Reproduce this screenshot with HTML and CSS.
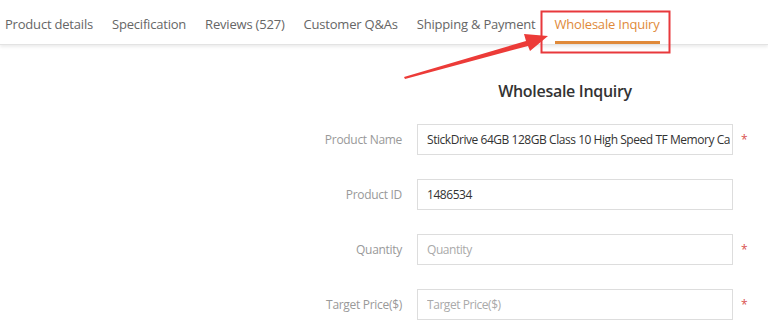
FILE: index.html
```html
<!DOCTYPE html>
<html lang="en">
  <head>
    <meta charset="UTF-8" />
    <meta name="viewport" content="width=device-width, initial-scale=1.0" />
    <title>Wholesale Inquiry</title>
    <link rel="stylesheet" href="styles.css">
  </head>

  <body>
    <nav class="tabs">
      <a class="tab">Product details</a>
      <a class="tab">Specification</a>
      <a class="tab">Reviews (527)</a>
      <a class="tab">Customer Q&amp;As</a>
      <a class="tab">Shipping &amp; Payment</a>
      <a class="tab active">Wholesale Inquiry</a>
    </nav>

    <main class="inquiry">
      <h2 class="inquiry-title">Wholesale Inquiry</h2>
      <form class="inquiry-form">
        <label class="field-label" for="productName">Product Name</label>
        <input id="productName" type="text" value="StickDrive 64GB 128GB Class 10 High Speed TF Memory Card" />
        <span class="required">*</span>

        <label class="field-label" for="productId">Product ID</label>
        <input id="productId" type="text" value="1486534" />
        <span class="required"></span>

        <label class="field-label" for="quantity">Quantity</label>
        <input id="quantity" type="text" placeholder="Quantity" />
        <span class="required">*</span>

        <label class="field-label" for="targetPrice">Target Price($)</label>
        <input id="targetPrice" type="text" placeholder="Target Price($)" />
        <span class="required">*</span>
      </form>
    </main>

    <!-- anotacion sobre la captura -->
    <svg class="annotation" width="768" height="333" viewBox="0 0 768 333">
      <rect x="541.5" y="11.5" width="128" height="41" fill="none" stroke="#e8393c" stroke-width="2" />
      <polygon points="404,77 526,41 524,34 548,36 530,51 528,46 405,79" fill="#ec3b38" />
    </svg>
  </body>
</html>
```

FILE: styles.css
```css
body {
  margin: 0;
  font-family: "Open Sans", "Liberation Sans", sans-serif;
  background: #fff;
  position: relative;
  height: 333px;
  overflow: hidden;
}

.tabs {
  display: flex;
  padding-left: 5px;
  height: 44px;
  border-bottom: 1px solid #e3e3e3;
  box-shadow: 0 2px 3px rgba(0, 0, 0, 0.08);
}

.tab {
  margin-right: 19px;
  padding-top: 14px;
  line-height: 20px;
  font-size: 13px;
  letter-spacing: -0.2px;
  color: #666;
  box-sizing: border-box;
  height: 44px;
}

.tab.active {
  color: #e08a3a;
  border-bottom: 3px solid #e08a3a;
}

.inquiry {
  padding-top: 35px;
}

.inquiry-title {
  margin: 0 0 22px;
  padding-left: 417px;
  width: 296px;
  text-align: center;
  font-size: 16px;
  font-weight: 600;
  letter-spacing: -0.3px;
  line-height: 22px;
  color: #333;
}

.inquiry-form {
  display: grid;
  grid-template-columns: 417px 316px 30px;
  row-gap: 24px;
  align-items: center;
}

.field-label {
  padding-right: 15px;
  text-align: right;
  font-size: 12px;
  letter-spacing: -0.3px;
  color: #999;
}

.inquiry-form input {
  box-sizing: border-box;
  height: 31px;
  padding: 0 2px 0 9px;
  border: 1px solid #ddd;
  font-family: inherit;
  font-size: 12px;
  letter-spacing: -0.45px;
  color: #333;
  outline: none;
}

.inquiry-form input::placeholder {
  color: #aaa;
}

.required {
  padding-left: 8px;
  font-size: 12px;
  color: #d9534f;
}

.annotation {
  position: absolute;
  top: 0;
  left: 0;
  pointer-events: none;
}
```
